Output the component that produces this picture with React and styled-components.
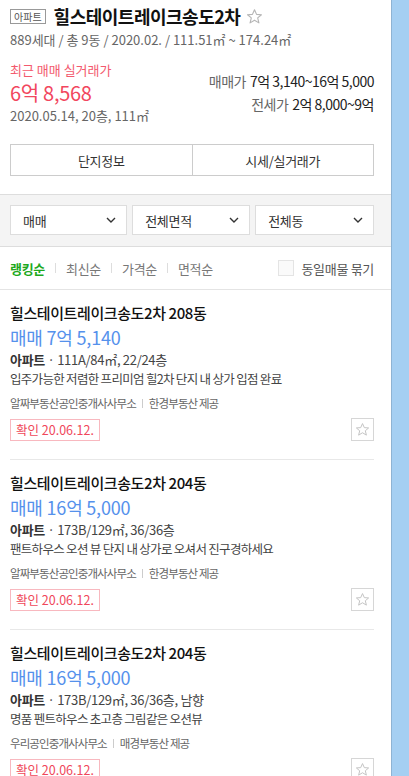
import React from 'react';
import styled, { createGlobalStyle } from 'styled-components';

const GlobalStyle = createGlobalStyle`
  html, body {
    margin: 0;
    padding: 0;
    height: 776px;
    overflow: hidden;
    background: #fff;
  }
  body {
    font-family: 'Noto Sans CJK KR', 'Noto Sans', sans-serif;
    color: #222;
  }
  * { box-sizing: border-box; }
`;

const Layout = styled.div`
  display: flex;
  height: 776px;
`;

const Panel = styled.div`
  width: 392px;
  flex-shrink: 0;
  border-right: 1px solid #8eb3d3;
  background: #fff;
  overflow: hidden;
`;

const MapArea = styled.div`
  flex: 1;
  background: #a5cff2;
`;

/* ---------- summary header ---------- */

const Summary = styled.section`
  padding: 4px 17px 0 10px;
`;

const TitleRow = styled.div`
  display: flex;
  align-items: center;
  height: 24px;
`;

const TypeBadge = styled.span`
  display: inline-flex;
  align-items: center;
  justify-content: center;
  height: 15px;
  padding: 0 3px;
  border: 1px solid #999;
  font-size: 10px;
  line-height: 13px;
  color: #555;
  margin-right: 8px;
`;

const Title = styled.h1`
  margin: 0;
  font-size: 18px;
  font-weight: 700;
  letter-spacing: -0.5px;
  line-height: 24px;
  color: #111;
`;

const StarIcon = ({ size = 15, color = '#b9b9b9' }) => (
  <svg width={size} height={size} viewBox="0 0 24 24" fill="none">
    <polygon
      points="12,2.5 14.9,9 21.8,9.5 16.5,14 18.2,21 12,17.2 5.8,21 7.5,14 2.2,9.5 9.1,9"
      stroke={color}
      strokeWidth="1.6"
      strokeLinejoin="round"
    />
  </svg>
);

const TitleStar = styled.span`
  display: inline-flex;
  margin-left: 6px;
  margin-top: 1px;
`;

const SubInfo = styled.p`
  margin: 2px 0 0;
  font-size: 13px;
  line-height: 20px;
  color: #666;
  letter-spacing: 0;
`;

const PriceBlock = styled.div`
  display: flex;
  justify-content: space-between;
  align-items: flex-start;
  margin-top: 10px;
`;

const RecentCol = styled.div`
  display: flex;
  flex-direction: column;
`;

const RecentLabel = styled.span`
  font-size: 13px;
  line-height: 20px;
  color: #f35a6e;
`;

const RecentPrice = styled.span`
  font-size: 20px;
  line-height: 26px;
  color: #f2475e;
  letter-spacing: -0.3px;
`;

const RecentMeta = styled.span`
  font-size: 13px;
  line-height: 20px;
  color: #666;
  letter-spacing: 0;
`;

const RangeCol = styled.div`
  display: flex;
  flex-direction: column;
  align-items: flex-end;
  gap: 5px;
  padding-top: 12px;
`;

const RangeLine = styled.div`
  font-size: 14px;
  line-height: 18px;
  color: #222;
  letter-spacing: -0.5px;
  span {
    color: #666;
    margin-right: 4px;
  }
`;

const TabButtons = styled.div`
  display: flex;
  margin: 18px 0 0;
  border: 1px solid #ccc;
  height: 32px;
`;

const TabButton = styled.button`
  flex: 1;
  background: #fff;
  border: none;
  border-left: ${(p) => (p.$first ? 'none' : '1px solid #ccc')};
  font-family: inherit;
  font-size: 13px;
  color: #333;
  letter-spacing: -0.3px;
  padding: 0;
`;

/* ---------- filter bar ---------- */

const FilterBar = styled.div`
  margin-top: 18px;
  display: flex;
  gap: 5px;
  padding: 10px 17px 11px 10px;
  background: #f4f4f4;
  border-top: 1px solid #ddd;
  border-bottom: 1px solid #ddd;
`;

const Select = styled.div`
  flex: ${(p) => p.$grow};
  height: 30px;
  display: flex;
  align-items: center;
  justify-content: space-between;
  padding: 0 10px 0 12px;
  background: #fff;
  border: 1px solid #ddd;
  font-size: 13px;
  color: #333;
  letter-spacing: -0.3px;
`;

const Chevron = () => (
  <svg width="10" height="6" viewBox="0 0 10 6" fill="none">
    <polyline points="1,1 5,5 9,1" stroke="#333" strokeWidth="1.4" />
  </svg>
);

/* ---------- sort row ---------- */

const SortRow = styled.div`
  height: 43px;
  display: flex;
  align-items: center;
  justify-content: space-between;
  padding: 0 17px 0 10px;
  border-bottom: 1px solid #e4e4e4;
`;

const SortList = styled.div`
  display: flex;
  align-items: center;
`;

const SortItem = styled.span`
  font-size: 13px;
  letter-spacing: -0.3px;
  color: ${(p) => (p.$active ? '#20a81c' : '#777')};
  font-weight: ${(p) => (p.$active ? 700 : 400)};
`;

const SortDivider = styled.i`
  display: inline-block;
  width: 1px;
  height: 10px;
  background: #ddd;
  margin: 0 10px;
`;

const GroupToggle = styled.label`
  display: flex;
  align-items: center;
  gap: 7px;
  font-size: 13px;
  color: #555;
  letter-spacing: -0.3px;
`;

const CheckBox = styled.span`
  width: 16px;
  height: 16px;
  border: 1px solid #e4e4e4;
  background: #fafafa;
`;

/* ---------- listings ---------- */

const ItemList = styled.ul`
  list-style: none;
  margin: 0;
  padding: 0 17px 0 10px;
`;

const Item = styled.li`
  padding: 13px 0 18px;
  border-bottom: 1px solid #e8e8e8;
`;

const ItemTitle = styled.div`
  font-size: 15px;
  line-height: 20px;
  font-weight: 500;
  color: #111;
  letter-spacing: -0.4px;
`;

const ItemPrice = styled.div`
  margin-top: 1px;
  font-size: 18px;
  line-height: 26px;
  color: #5591ec;
  letter-spacing: -0.2px;
`;

const ItemSpec = styled.div`
  font-size: 13px;
  line-height: 19px;
  color: #444;
  letter-spacing: -0.3px;
  b {
    font-weight: 700;
    color: #333;
  }
`;

const ItemDesc = styled.div`
  font-size: 12.5px;
  line-height: 19px;
  color: #444;
  letter-spacing: -0.7px;
`;

const ItemAgent = styled.div`
  margin-top: 6px;
  font-size: 11.5px;
  line-height: 18px;
  color: #666;
  letter-spacing: -0.9px;
  display: flex;
  align-items: center;
`;

const AgentDivider = styled.i`
  display: inline-block;
  width: 1px;
  height: 9px;
  background: #ccc;
  margin: 0 6px;
`;

const ItemFooter = styled.div`
  margin-top: 6px;
  display: flex;
  justify-content: space-between;
  align-items: center;
`;

const ConfirmBadge = styled.span`
  display: inline-flex;
  align-items: center;
  height: 22px;
  padding: 0 5px;
  border: 1px solid #f8b8bf;
  font-size: 12.5px;
  color: #f0475a;
  letter-spacing: 0;
`;

const FavButton = styled.span`
  width: 23px;
  height: 23px;
  display: inline-flex;
  align-items: center;
  justify-content: center;
  border: 1px solid #d6d6d6;
  background: #fff;
`;

const listings = [
  {
    title: '힐스테이트레이크송도2차 208동',
    price: '매매 7억 5,140',
    spec: '111A/84㎡, 22/24층',
    desc: '입주가능한 저렴한 프리미엄 힐2차 단지 내 상가 입점 완료',
    agent: '알짜부동산공인중개사사무소',
    source: '한경부동산 제공',
  },
  {
    title: '힐스테이트레이크송도2차 204동',
    price: '매매 16억 5,000',
    spec: '173B/129㎡, 36/36층',
    desc: '팬트하우스 오션 뷰 단지 내 상가로 오셔서 진구경하세요',
    agent: '알짜부동산공인중개사사무소',
    source: '한경부동산 제공',
  },
  {
    title: '힐스테이트레이크송도2차 204동',
    price: '매매 16억 5,000',
    spec: '173B/129㎡, 36/36층, 남향',
    desc: '명품 펜트하우스 초고층 그림같은 오션뷰',
    agent: '우리공인중개사사무소',
    source: '매경부동산 제공',
  },
];

export default function App() {
  return (
    <>
      <GlobalStyle />
      <Layout>
        <Panel>
          <Summary>
            <TitleRow>
              <TypeBadge>아파트</TypeBadge>
              <Title>힐스테이트레이크송도2차</Title>
              <TitleStar>
                <StarIcon size={17} color="#b5b5b5" />
              </TitleStar>
            </TitleRow>
            <SubInfo>889세대 / 총 9동 / 2020.02. / 111.51㎡ ~ 174.24㎡</SubInfo>
            <PriceBlock>
              <RecentCol>
                <RecentLabel>최근 매매 실거래가</RecentLabel>
                <RecentPrice>6억 8,568</RecentPrice>
                <RecentMeta>2020.05.14, 20층, 111㎡</RecentMeta>
              </RecentCol>
              <RangeCol>
                <RangeLine>
                  <span>매매가</span>7억 3,140~16억 5,000
                </RangeLine>
                <RangeLine>
                  <span>전세가</span>2억 8,000~9억
                </RangeLine>
              </RangeCol>
            </PriceBlock>
            <TabButtons>
              <TabButton $first>단지정보</TabButton>
              <TabButton>시세/실거래가</TabButton>
            </TabButtons>
          </Summary>

          <FilterBar>
            <Select $grow={117}>
              매매 <Chevron />
            </Select>
            <Select $grow={118}>
              전체면적 <Chevron />
            </Select>
            <Select $grow={119}>
              전체동 <Chevron />
            </Select>
          </FilterBar>

          <SortRow>
            <SortList>
              <SortItem $active>랭킹순</SortItem>
              <SortDivider />
              <SortItem>최신순</SortItem>
              <SortDivider />
              <SortItem>가격순</SortItem>
              <SortDivider />
              <SortItem>면적순</SortItem>
            </SortList>
            <GroupToggle>
              <CheckBox />
              동일매물 묶기
            </GroupToggle>
          </SortRow>

          <ItemList>
            {listings.map((item, i) => (
              <Item key={i}>
                <ItemTitle>{item.title}</ItemTitle>
                <ItemPrice>{item.price}</ItemPrice>
                <ItemSpec>
                  <b>아파트</b> · {item.spec}
                </ItemSpec>
                <ItemDesc>{item.desc}</ItemDesc>
                <ItemAgent>
                  {item.agent}
                  <AgentDivider />
                  {item.source}
                </ItemAgent>
                <ItemFooter>
                  <ConfirmBadge>확인 20.06.12.</ConfirmBadge>
                  <FavButton>
                    <StarIcon size={15} color="#c4c4c4" />
                  </FavButton>
                </ItemFooter>
              </Item>
            ))}
          </ItemList>
        </Panel>
        <MapArea />
      </Layout>
    </>
  );
}
